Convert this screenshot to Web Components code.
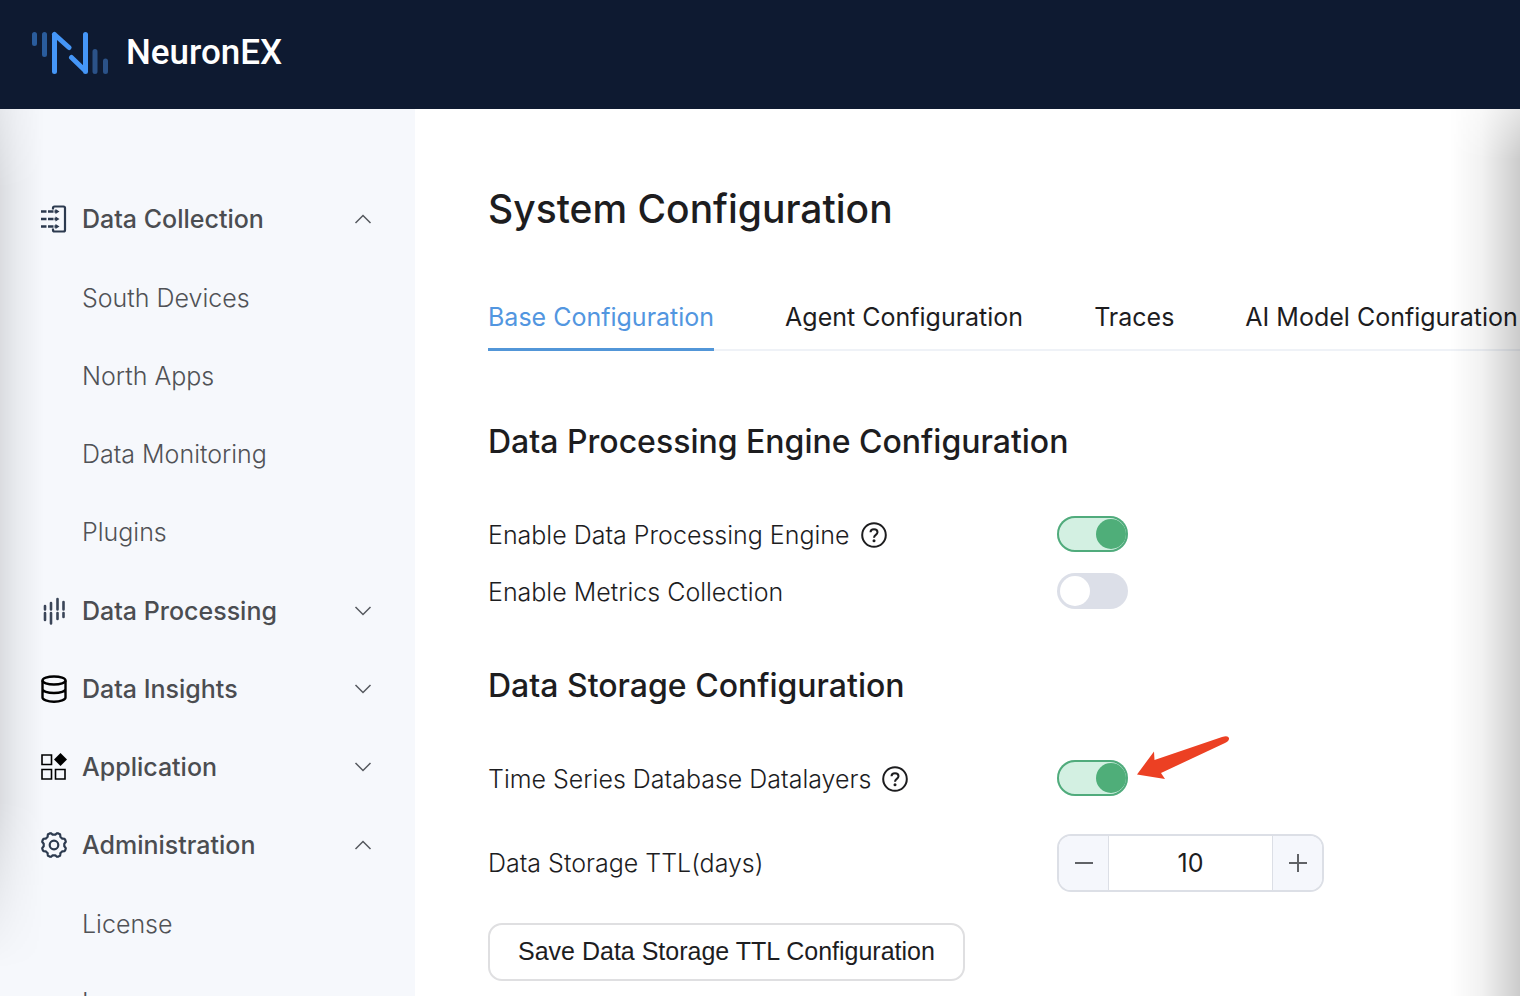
<!DOCTYPE html>
<html lang="en">
<head>
<meta charset="utf-8">
<title>NeuronEX - System Configuration</title>
<style>
  html, body { margin: 0; height: 100%; }
  body { font-family: Inter, "Liberation Sans", sans-serif; font-size: 25px; line-height: 32px; color: #1d1d1f; background: #fff; overflow: hidden; }
</style>
</head>
<body>
<nx-app>
  <nx-brand slot="header"></nx-brand>
  <nx-menu slot="aside">
    <nx-menu-group label="Data Collection" icon="collection" open>
      <nx-menu-item>South Devices</nx-menu-item>
      <nx-menu-item>North Apps</nx-menu-item>
      <nx-menu-item>Data Monitoring</nx-menu-item>
      <nx-menu-item>Plugins</nx-menu-item>
    </nx-menu-group>
    <nx-menu-group label="Data Processing" icon="processing"></nx-menu-group>
    <nx-menu-group label="Data Insights" icon="insights"></nx-menu-group>
    <nx-menu-group label="Application" icon="application"></nx-menu-group>
    <nx-menu-group label="Administration" icon="administration" open>
      <nx-menu-item>License</nx-menu-item>
      <nx-menu-item>Logs</nx-menu-item>
    </nx-menu-group>
  </nx-menu>
  <nx-page heading="System Configuration">
    <nx-tabs slot="tabs">
      <nx-tab active>Base Configuration</nx-tab>
      <nx-tab>Agent Configuration</nx-tab>
      <nx-tab>Traces</nx-tab>
      <nx-tab>AI Model Configuration</nx-tab>
    </nx-tabs>
    <nx-section heading="Data Processing Engine Configuration">
      <nx-switch label="Enable Data Processing Engine" help checked></nx-switch>
      <nx-switch label="Enable Metrics Collection"></nx-switch>
    </nx-section>
    <nx-section heading="Data Storage Configuration">
      <nx-switch label="Time Series Database Datalayers" help checked><nx-pointer></nx-pointer></nx-switch>
      <nx-number label="Data Storage TTL(days)" value="10"></nx-number>
      <nx-button>Save Data Storage TTL Configuration</nx-button>
    </nx-section>
  </nx-page>
</nx-app>

<script>
const define = (name, render) => customElements.define(name, class extends HTMLElement {
  constructor() {
    super();
    const root = this.attachShadow({ mode: 'open' });
    const t = document.createElement('template');
    t.innerHTML = render(this);
    root.append(t.content.cloneNode(true));
  }
});

define('nx-app', () => `
  <style>
    :host { display: grid; grid-template: auto minmax(0, 1fr) / 415px minmax(0, 1fr); height: 100vh; position: relative; overflow: hidden; }
    header { grid-column: 1 / -1; height: 109px; display: flex; align-items: center; background: #0e1a31; padding: 0 32px 4px; box-sizing: border-box; }
    aside { background: #f6f8fc; overflow: hidden; }
    main { overflow: hidden; background: #fff; }
    .body { grid-column: 1 / -1; display: grid; grid-template-columns: subgrid; position: relative; overflow: hidden; }
    .body::before, .body::after { content: ""; position: absolute; top: 0; bottom: 0; pointer-events: none; z-index: 1; }
    .body::before { left: 0; width: 44px; background: linear-gradient(to right, rgba(0,0,0,.11), rgba(0,0,0,.05) 40%, transparent); mask-image: linear-gradient(rgba(0,0,0,.6), #000 80px, #000 78%, transparent 97%); }
    .body::after { right: 0; width: 70px; background: linear-gradient(to right, transparent, rgba(0,0,0,.05) 45%, rgba(0,0,0,.2)); border-right: 1px solid rgba(0,0,0,.2); box-sizing: border-box; mask-image: linear-gradient(rgba(0,0,0,.5), #000 50px); }
  </style>
  <header><slot name="header"></slot></header>
  <div class="body">
    <aside><slot name="aside"></slot></aside>
    <main><slot></slot></main>
  </div>`);

define('nx-brand', () => `
  <style>
    :host { display: block; }
    a { display: flex; align-items: center; gap: 18px; color: #fff; text-decoration: none; font: 500 35px/44px Roboto, sans-serif; }
    svg { display: block; }
  </style>
  <a href="#">
    <svg width="76" height="44" viewBox="0 0 76 44" fill="none" stroke-linecap="round" stroke-width="5" aria-hidden="true">
      <g stroke="#2a5c9c"><path d="M2.5 3.5v9M12.5 3.5v20"/><path d="M63 20.500v20M73.500 30v10.500" stroke="#2b5288"/></g>
      <path d="M22.500 3.500v37M53.500 3.500v37M22.500 3.500L37 16.500M39.500 26.500L53.500 40" stroke="#4596f7"/>
    </svg>
    <span>NeuronEX</span>
  </a>`);

define('nx-menu', () => `
  <style>
    :host { display: block; }
    nav { padding-top: 71px; }
  </style>
  <nav aria-label="Main"><slot></slot></nav>`);

const icons = {
  collection: `<g stroke="#2c3a4f" stroke-width="2.200"><path d="M13 4.500V3q0-1.500 1.500-1.500h9q1.500 0 1.500 1.500v22q0 1.500-1.500 1.500h-9q-1.500 0-1.500-1.500v-1.500"/><path stroke-width="2.600" d="M1 6.500h5.500M8 6.500h5.500M1 14h5.500M8 14h5.500M1 21.500h5.500M8 21.500h5.500M14.500 6.500h2M14.500 14h2M14.500 21.500h2"/></g><path fill="#2c3a4f" d="M15.500 4l4 2.500-4 2.500zM15.500 11.500l4 2.500-4 2.500zM15.500 19l4 2.500-4 2.500z"/>`,
  processing: `<g stroke="#3a4558" stroke-width="2.600" stroke-linecap="round"><path d="M5 9v3.500M5 16v7M11 6v6.500M11 16v10.500M17.500 2v10.500M17.500 16v6M23.500 5v7.500M23.500 16v4"/></g>`,
  insights: `<g stroke="#000" stroke-width="2.400"><ellipse cx="14" cy="5.500" rx="11.500" ry="4"/><path d="M2.500 5.500v17c0 2.200 5 4.200 11.500 4.200s11.500-2 11.500-4.200v-17M2.500 14c0 2.200 5 4 11.500 4s11.500-1.800 11.500-4"/></g>`,
  application: `<g stroke="#000" stroke-width="1.600"><path d="M2 2h9.500v9.500H2zM2 16.500h9.500V26H2zM15.500 16.500H25V26h-9.500z"/></g><path fill="#000" d="M20.500 0l6.500 6.500-6.500 6.500L14 6.500z"/>`,
  administration: (() => {
    let d = '';
    for (let i = 0; i < 96; i++) {
      const a = i / 96 * Math.PI * 2, s = Math.cos(8 * a + Math.PI);
      const r = 11.3 + 1 * Math.max(-1, Math.min(1, s * 1.8));
      d += (i ? 'L' : 'M') + (14 + r * Math.cos(a)).toFixed(2) + ' ' + (14 + r * Math.sin(a)).toFixed(2);
    }
    return `<g stroke="#2c3a4f" stroke-width="2.200" stroke-linejoin="round"><path d="${d}Z"/><circle cx="14" cy="14" r="4.300"/></g>`;
  })()
};

define('nx-menu-group', el => `
  <style>
    :host { display: block; }
    button { all: unset; display: flex; align-items: center; gap: 14px; width: 100%; box-sizing: border-box; height: 78px; padding: 0 43px 0 40px; color: #4b4d51; font: 500 25px/32px Inter, sans-serif; cursor: pointer; }
    span { flex: 1; }
    svg { display: block; flex: none; }
    div { padding: 1px 0; }
    div[hidden] { display: none; }
  </style>
  <button type="button" aria-expanded="${el.hasAttribute('open')}">
    <svg width="28" height="28" viewBox="0 0 28 28" fill="none" aria-hidden="true">${icons[el.getAttribute('icon')]}</svg>
    <span>${el.getAttribute('label')}</span>
    <svg width="18" height="12" viewBox="0 0 18 12" fill="none" stroke="#55585e" stroke-width="1.500" aria-hidden="true"><path d="${el.hasAttribute('open') ? 'M1.500 10L9 2.500L16.500 10' : 'M1.500 2L9 9.500L16.500 2'}"/></svg>
  </button>
  <div ${el.hasAttribute('open') ? '' : 'hidden'}><slot></slot></div>`);

define('nx-menu-item', () => `
  <style>
    :host { display: block; }
    a { display: flex; align-items: center; height: 78px; padding-left: 82px; color: #505256; text-decoration: none; font-weight: 350; }
  </style>
  <a href="#"><slot></slot></a>`);

define('nx-page', el => `
  <style>
    :host { display: block; padding: 76px 0 0 73px; }
    h1 { margin: 0 0 53px; font-size: 39px; line-height: 48px; font-weight: 500; }
  </style>
  <h1>${el.getAttribute('heading')}</h1>
  <slot name="tabs"></slot>
  <slot></slot>`);

define('nx-tabs', () => `
  <style>
    :host { display: block; border-bottom: 2px solid #eff2f7; margin-bottom: 66px; }
    div { display: flex; gap: 71px; margin-bottom: -2px; }
  </style>
  <div role="tablist"><slot></slot></div>`);

define('nx-tab', el => `
  <style>
    :host { display: block; flex: none; }
    button { all: unset; display: block; height: 62px; border-bottom: 3px solid transparent; white-space: nowrap; cursor: pointer; }
    button[aria-selected="true"] { color: #5296e0; border-color: #5296d8; }
  </style>
  <button type="button" role="tab" aria-selected="${el.hasAttribute('active')}"><slot></slot></button>`);

define('nx-section', el => `
  <style>
    :host { display: block; margin-bottom: 42px; }
    h2 { margin: 0 0 38px; font-size: 32px; line-height: 50px; font-weight: 500; }
  </style>
  <h2>${el.getAttribute('heading')}</h2>
  <slot></slot>`);

const helpIcon = `<svg width="26" height="26" viewBox="0 0 26 26" fill="none" stroke="#1d1d1f" stroke-width="2" aria-hidden="true"><circle cx="13" cy="13" r="11.800"/><path d="M9.500 10.300c0-4.200 7-4.200 7 0 0 2.600-3.500 2.600-3.500 5.400"/><circle cx="13" cy="18.800" r="1.500" fill="#1d1d1f" stroke="none"/></svg>`;

define('nx-switch', el => `
  <style>
    :host { display: grid; grid-template-columns: 569px auto 1fr; align-items: center; height: 57px; }
    label { display: flex; align-items: center; gap: 11px; padding-top: 3px; font-weight: 350; }
    svg { display: block; }
    input { appearance: none; position: relative; margin: 0; width: 71px; height: 36px; border-radius: 18px; background: #dcdfe8; cursor: pointer; }
    input::before { content: ""; position: absolute; left: 3px; top: 3px; width: 30px; height: 30px; border-radius: 50%; background: #fff; }
    input:checked { background: #d3f0e2; box-shadow: inset 0 0 0 2px #50ab7c; }
    input:checked::before { left: 39px; background: #4fae79; }
  </style>
  <label for="s">${el.getAttribute('label')}${el.hasAttribute('help') ? helpIcon : ''}</label>
  <input id="s" type="checkbox" role="switch" ${el.hasAttribute('checked') ? 'checked' : ''}>
  <slot></slot>`);

define('nx-pointer', () => `
  <style>
    :host { display: block; position: relative; width: 0; height: 0; }
    svg { position: absolute; left: 8px; top: -42px; }
  </style>
  <svg width="94" height="46" viewBox="0 0 94 46" aria-hidden="true"><path fill="#ec4023" d="M1 38.500L18 15.500L18.500 24L86 1q6-2 7 1 .5 3-4 5L25 37L29 43z"/></svg>`);

define('nx-number', el => `
  <style>
    :host { display: grid; grid-template-columns: 569px auto; justify-content: start; align-items: center; margin: 28px 0 31px; }
    label { font-weight: 350; }
    div { display: flex; width: 267px; height: 58px; box-sizing: border-box; border: 2px solid #dcdfe6; border-radius: 14px; overflow: hidden; background: #fff; }
    button { all: unset; flex: none; width: 49px; display: grid; place-items: center; background: #f5f7fc; cursor: pointer; }
    input { flex: 1; min-width: 0; margin: 0; padding: 0; border: solid #dcdfe6; border-width: 0 1px; background: none; text-align: center; font: 400 25px/32px Inter, sans-serif; color: #1d1d1f; outline: none; }
  </style>
  <label for="n">${el.getAttribute('label')}</label>
  <div>
    <button type="button" aria-label="Decrease"><svg width="20" height="20" stroke="#606266" stroke-width="2"><path d="M1 10h18"/></svg></button>
    <input id="n" type="text" inputmode="numeric" value="${el.getAttribute('value')}">
    <button type="button" aria-label="Increase"><svg width="20" height="20" stroke="#606266" stroke-width="2"><path d="M1 10h18M10 1v18"/></svg></button>
  </div>`);

define('nx-button', () => `
  <style>
    :host { display: block; }
    button { height: 58px; padding: 0 28px 2px; border: 2px solid #dfdfe1; border-radius: 14px; background: #fff; color: #1d1d1f; font: 25px/32px "Liberation Sans", Arial, sans-serif; cursor: pointer; }
  </style>
  <button type="button"><slot></slot></button>`);
</script>
</body>
</html>
